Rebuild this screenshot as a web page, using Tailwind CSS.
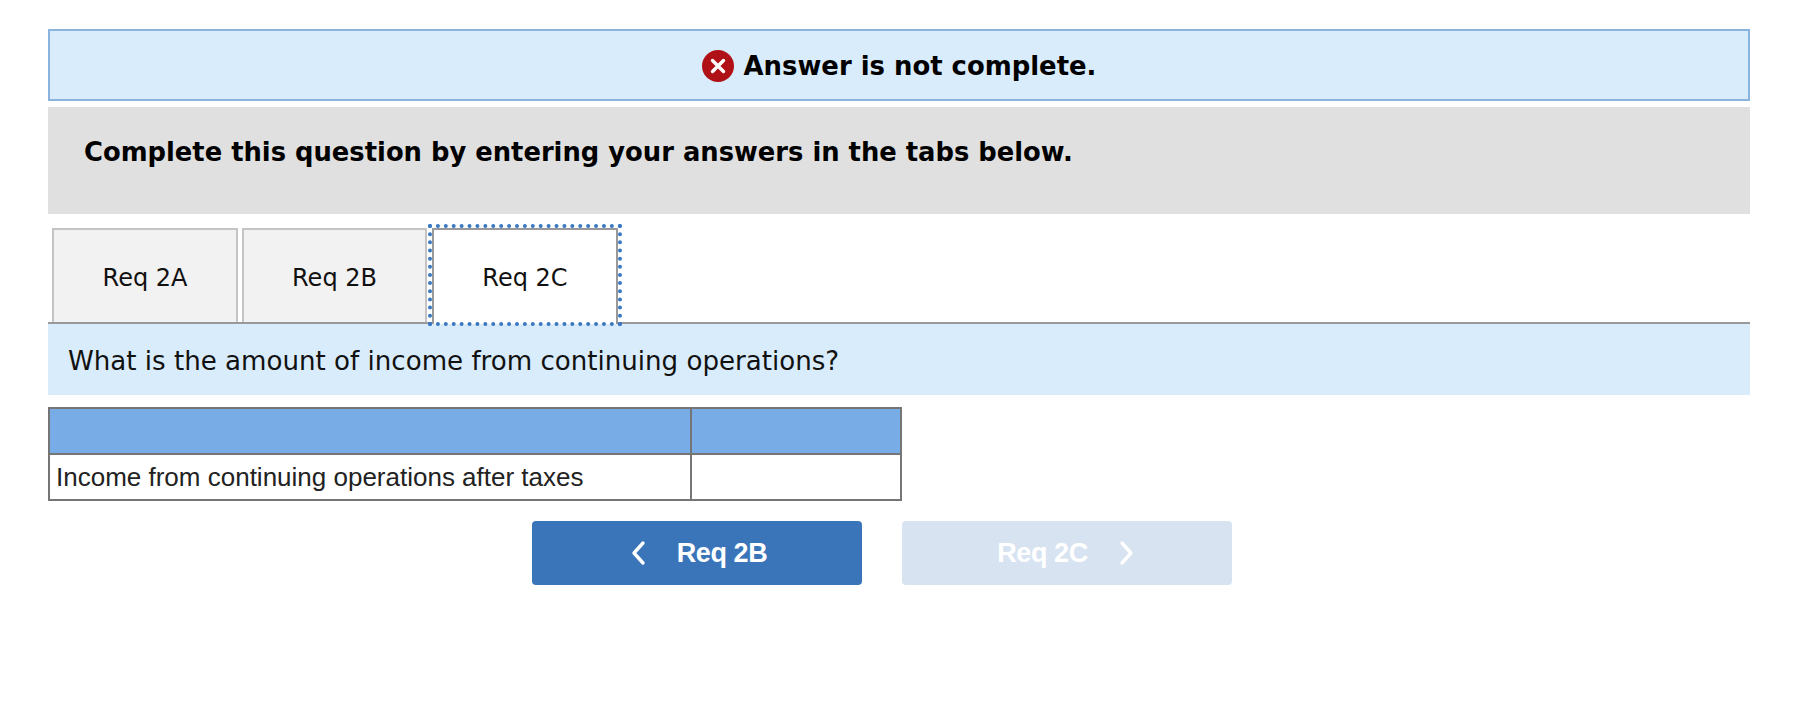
<!doctype html>
<html>
<head>
<meta charset="utf-8">
<script src="https://cdn.jsdelivr.net/npm/@tailwindcss/browser@4"></script>
</head>
<body class="bg-white font-['DejaVu_Sans',sans-serif] text-black">
<main class="w-[1702px] ml-12 pt-[29px]">
  <div class="h-[72px] bg-[#d9ecfb] border-2 border-[#8ab4de] flex items-center justify-center gap-[10px] pt-[2px]">
    <svg class="w-8 h-8" viewBox="0 0 32 32"><circle cx="16" cy="16" r="16" fill="#b01116"/><path d="M10.5 10.5 21.5 21.5M21.5 10.5 10.5 21.5" stroke="#fff" stroke-width="3.4" stroke-linecap="round"/></svg>
    <span class="font-bold text-[25.9px]">Answer is not complete.</span>
  </div>
  <div class="mt-[6px] h-[107px] bg-[#e0e0e0] pl-9 pt-[25px]">
    <p class="font-bold text-[25.8px] leading-[40px]">Complete this question by entering your answers in the tabs below.</p>
  </div>
  <div class="mt-[14px] h-[96px] flex items-end gap-[4px] pl-1 border-b-2 border-[#999]">
    <button class="w-[186px] h-[94px] pt-[3px] bg-[#f2f2f2] border-2 border-b-0 border-[#c4c4c4] text-[24px] text-[#111]">Req 2A</button>
    <button class="w-[185px] h-[94px] pt-[3px] bg-[#f2f2f2] border-2 border-b-0 border-[#c4c4c4] text-[24px] text-[#111]">Req 2B</button>
    <button class="w-[186px] h-[96px] pt-[1px] -mb-[2px] ml-[1px] relative bg-white border-2 border-b-0 border-[#999] text-[24px] text-[#111]">Req 2C<span class="absolute -left-[6px] -right-[6px] -top-[6px] -bottom-[2px] border-[4px] border-dotted border-[#3b78c3] pointer-events-none"></span></button>
  </div>
  <div class="h-[71px] bg-[#d9ecfb] pl-[20px] pt-[5px] flex items-center text-[26.1px] text-[#111]">What is the amount of income from continuing operations?</div>
  <table class="mt-3 w-[852px] border-collapse table-fixed font-['Liberation_Sans',sans-serif] text-[26px] text-[#222]">
    <colgroup><col class="w-[642px]"><col class="w-[210px]"></colgroup>
    <tbody>
      <tr class="h-[46px] bg-[#78ace6]"><td class="border-2 border-[#757575]"></td><td class="border-2 border-[#757575]"></td></tr>
      <tr class="h-[46px]"><td class="border-2 border-[#757575] pl-[6px]">Income from continuing operations after taxes</td><td class="border-2 border-[#757575]"></td></tr>
    </tbody>
  </table>
  <div class="mt-5 flex gap-[40px] pl-[484px] font-['Liberation_Sans',sans-serif] font-bold text-[27px] text-white">
    <button class="w-[330px] h-[64px] pl-[3px] rounded-[4px] bg-[#3b75b9] flex items-center justify-center gap-[31px]">
      <svg class="w-[16px] h-[26px]" viewBox="0 0 16 26" fill="none"><path d="M13 3 4 13 13 23" stroke="#fff" stroke-width="3.4" stroke-linecap="round" stroke-linejoin="round"/></svg>
      <span class="tracking-[-0.4px]">Req 2B</span>
    </button>
    <button class="w-[330px] h-[64px] pr-[2px] rounded-[4px] bg-[#d8e3f1] flex items-center justify-center gap-[31px]">
      <span class="tracking-[-0.4px]">Req 2C</span>
      <svg class="w-[16px] h-[26px]" viewBox="0 0 16 26" fill="none"><path d="M3 3 12 13 3 23" stroke="#fff" stroke-width="3.4" stroke-linecap="round" stroke-linejoin="round"/></svg>
    </button>
  </div>
</main>
</body>
</html>
